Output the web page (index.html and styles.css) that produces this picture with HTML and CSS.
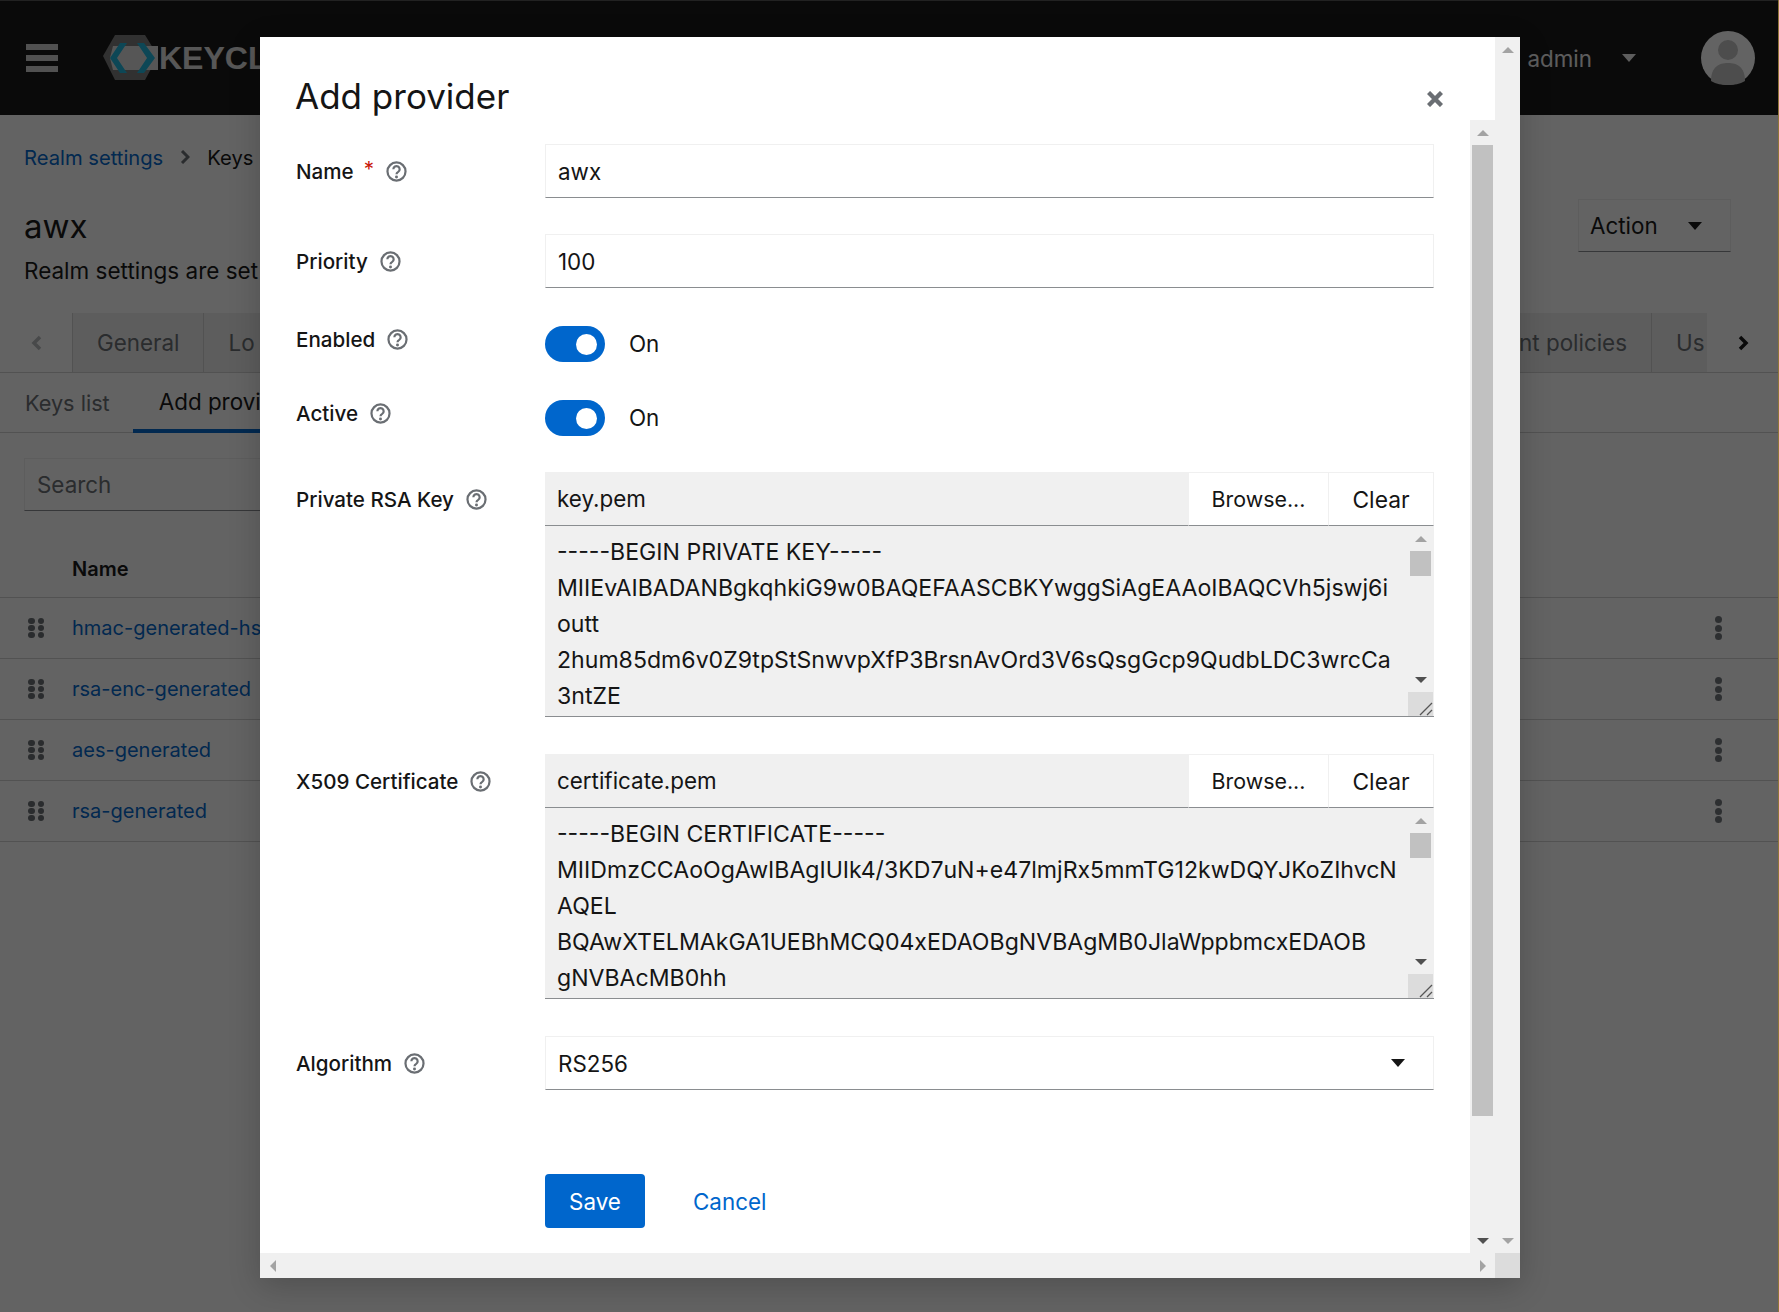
FILE: index.html
```html
<!DOCTYPE html>
<html>
<head>
  <meta charset="utf-8">
  <title>Keycloak - Add provider</title>
  <link rel="stylesheet" href="styles.css">
</head>
<body>

<div class="page">

  <header class="masthead">
    <div class="burger"><span></span><span></span><span></span></div>
    <div class="logo">
      <svg width="60" height="50" viewBox="0 0 60 50">
        <polygon points="3,23 15,2 45,2 58,23 45,47 15,47" fill="#7d7d7d"/>
        <polygon points="13,13 58,13 58,37 13,37 10,25" fill="#dedede"/>
        <polygon points="20,10 27,10 17,25 27,40 20,40 10,25" fill="#1fb6dc"/>
        <polygon points="37,10 44,10 55,25 44,40 37,40 47,25" fill="#1fb6dc"/>
      </svg>
      <span class="logo-text">KEYCL</span>
    </div>
    <div class="user">
      <span class="user-name">admin</span>
      <span class="caret caret-light"></span>
      <svg class="avatar" width="54" height="54" viewBox="0 0 54 54">
        <circle cx="27" cy="27" r="27" fill="#fff"/>
        <circle cx="27" cy="19" r="10" fill="#c4c4c4"/>
        <path d="M10 50c0-14 8-18 17-18s17 4 17 18c-5 3-11 4-17 4s-12-1-17-4z" fill="#c4c4c4"/>
      </svg>
    </div>
  </header>

  <nav class="crumbs">
    <a href="#">Realm settings</a>
    <svg class="crumb-sep" width="10" height="14" viewBox="0 0 10 14"><path d="M2 1l6 6-6 6" fill="none" stroke="#6a6e73" stroke-width="3"/></svg>
    <span>Keys</span>
  </nav>

  <section class="title-row">
    <div>
      <h1 class="realm">awx</h1>
      <p class="realm-sub">Realm settings are set</p>
    </div>
    <button class="action">Action <span class="caret"></span></button>
  </section>

  <div class="tabs">
    <div class="tab-btn"><svg width="11" height="16" viewBox="0 0 11 16"><path d="M9 2L3 8l6 6" fill="none" stroke="#b8bbbe" stroke-width="3.5"/></svg></div>
    <div class="tab-list">
      <div class="tab-group">
        <div class="tab">General</div>
        <div class="tab">Lo</div>
      </div>
      <div class="tab-group">
        <div class="tab">Client policies</div>
        <div class="tab tab-cut">Us</div>
      </div>
    </div>
    <div class="tab-btn"><svg width="11" height="16" viewBox="0 0 11 16"><path d="M2 2l6 6-6 6" fill="none" stroke="#151515" stroke-width="3.5"/></svg></div>
  </div>

  <div class="subtabs">
    <div class="subtab subtab-first">Keys list</div>
    <div class="subtab subtab-on">Add provider</div>
  </div>

  <div class="search">Search</div>

  <div class="table">
    <div class="thead">Name</div>
    <div class="trow"><span class="grip"><i></i><i></i><i></i><i></i><i></i><i></i></span><a href="#">hmac-generated-hs256</a><span class="kebab"><i></i><i></i><i></i></span></div>
    <div class="trow"><span class="grip"><i></i><i></i><i></i><i></i><i></i><i></i></span><a href="#">rsa-enc-generated</a><span class="kebab"><i></i><i></i><i></i></span></div>
    <div class="trow"><span class="grip"><i></i><i></i><i></i><i></i><i></i><i></i></span><a href="#">aes-generated</a><span class="kebab"><i></i><i></i><i></i></span></div>
    <div class="trow"><span class="grip"><i></i><i></i><i></i><i></i><i></i><i></i></span><a href="#">rsa-generated</a><span class="kebab"><i></i><i></i><i></i></span></div>
  </div>

</div>

<div class="backdrop"></div>

<div class="modal">

  <div class="modal-main">
    <div class="modal-head">
      <h2>Add provider</h2>
      <svg class="close" width="16" height="16" viewBox="0 0 16 16"><path d="M1.5 1.5l13 13M14.5 1.5l-13 13" stroke="#6a6e73" stroke-width="4.4"/></svg>
    </div>

    <div class="modal-body">
      <form class="form">

        <div class="row first">
          <div class="lbl">Name <span class="req">*</span>
            <svg class="help" viewBox="0 0 20 20"><circle cx="10" cy="10" r="8.6" fill="none" stroke="#6a6e73" stroke-width="2.1"/><path d="M7 7.8a3 3 0 1 1 4.6 2.6c-1 .6-1.6 1-1.6 2.2" fill="none" stroke="#6a6e73" stroke-width="2.1"/><circle cx="10" cy="15.2" r="1.4" fill="#6a6e73"/></svg>
          </div>
          <div class="input">awx</div>
        </div>

        <div class="row">
          <div class="lbl">Priority
            <svg class="help" viewBox="0 0 20 20"><circle cx="10" cy="10" r="8.6" fill="none" stroke="#6a6e73" stroke-width="2.1"/><path d="M7 7.8a3 3 0 1 1 4.6 2.6c-1 .6-1.6 1-1.6 2.2" fill="none" stroke="#6a6e73" stroke-width="2.1"/><circle cx="10" cy="15.2" r="1.4" fill="#6a6e73"/></svg>
          </div>
          <div class="input">100</div>
        </div>

        <div class="row row-toggle">
          <div class="lbl lbl-short">Enabled
            <svg class="help" viewBox="0 0 20 20"><circle cx="10" cy="10" r="8.6" fill="none" stroke="#6a6e73" stroke-width="2.1"/><path d="M7 7.8a3 3 0 1 1 4.6 2.6c-1 .6-1.6 1-1.6 2.2" fill="none" stroke="#6a6e73" stroke-width="2.1"/><circle cx="10" cy="15.2" r="1.4" fill="#6a6e73"/></svg>
          </div>
          <div class="switch"><span class="toggle"><i></i></span><span class="switch-txt">On</span></div>
        </div>

        <div class="row row-toggle">
          <div class="lbl lbl-short">Active
            <svg class="help" viewBox="0 0 20 20"><circle cx="10" cy="10" r="8.6" fill="none" stroke="#6a6e73" stroke-width="2.1"/><path d="M7 7.8a3 3 0 1 1 4.6 2.6c-1 .6-1.6 1-1.6 2.2" fill="none" stroke="#6a6e73" stroke-width="2.1"/><circle cx="10" cy="15.2" r="1.4" fill="#6a6e73"/></svg>
          </div>
          <div class="switch"><span class="toggle"><i></i></span><span class="switch-txt">On</span></div>
        </div>

        <div class="row">
          <div class="lbl">Private RSA Key
            <svg class="help" viewBox="0 0 20 20"><circle cx="10" cy="10" r="8.6" fill="none" stroke="#6a6e73" stroke-width="2.1"/><path d="M7 7.8a3 3 0 1 1 4.6 2.6c-1 .6-1.6 1-1.6 2.2" fill="none" stroke="#6a6e73" stroke-width="2.1"/><circle cx="10" cy="15.2" r="1.4" fill="#6a6e73"/></svg>
          </div>
          <div class="upload">
            <div class="upload-top">
              <div class="filename">key.pem</div>
              <div class="upbtn upbtn-browse">Browse...</div>
              <div class="upbtn upbtn-clear">Clear</div>
            </div>
            <div class="area">
              <div class="area-text">
                <div>-----BEGIN PRIVATE KEY-----</div>
                <div>MIIEvAIBADANBgkqhkiG9w0BAQEFAASCBKYwggSiAgEAAoIBAQCVh5jswj6i</div>
                <div>outt</div>
                <div>2hum85dm6v0Z9tpStSnwvpXfP3BrsnAvOrd3V6sQsgGcp9QudbLDC3wrcCa</div>
                <div>3ntZE</div>
              </div>
              <div class="area-bar">
                <div class="sb-btn"><span class="arr-up"></span></div>
                <div class="area-thumb"></div>
                <div class="sb-fill"></div>
                <div class="sb-btn"><span class="arr-down arr-dark"></span></div>
                <div class="area-corner"><svg width="14" height="14" viewBox="0 0 14 14"><path d="M1 13L13 1M8 13l5-5" stroke="#555" stroke-width="1.3"/></svg></div>
              </div>
            </div>
          </div>
        </div>

        <div class="row row-next">
          <div class="lbl">X509 Certificate
            <svg class="help" viewBox="0 0 20 20"><circle cx="10" cy="10" r="8.6" fill="none" stroke="#6a6e73" stroke-width="2.1"/><path d="M7 7.8a3 3 0 1 1 4.6 2.6c-1 .6-1.6 1-1.6 2.2" fill="none" stroke="#6a6e73" stroke-width="2.1"/><circle cx="10" cy="15.2" r="1.4" fill="#6a6e73"/></svg>
          </div>
          <div class="upload">
            <div class="upload-top">
              <div class="filename">certificate.pem</div>
              <div class="upbtn upbtn-browse">Browse...</div>
              <div class="upbtn upbtn-clear">Clear</div>
            </div>
            <div class="area">
              <div class="area-text">
                <div>-----BEGIN CERTIFICATE-----</div>
                <div>MIIDmzCCAoOgAwIBAgIUIk4/3KD7uN+e47lmjRx5mmTG12kwDQYJKoZIhvcN</div>
                <div>AQEL</div>
                <div>BQAwXTELMAkGA1UEBhMCQ04xEDAOBgNVBAgMB0JlaWppbmcxEDAOB</div>
                <div>gNVBAcMB0hh</div>
              </div>
              <div class="area-bar">
                <div class="sb-btn"><span class="arr-up"></span></div>
                <div class="area-thumb"></div>
                <div class="sb-fill"></div>
                <div class="sb-btn"><span class="arr-down arr-dark"></span></div>
                <div class="area-corner"><svg width="14" height="14" viewBox="0 0 14 14"><path d="M1 13L13 1M8 13l5-5" stroke="#555" stroke-width="1.3"/></svg></div>
              </div>
            </div>
          </div>
        </div>

        <div class="row row-next">
          <div class="lbl">Algorithm
            <svg class="help" viewBox="0 0 20 20"><circle cx="10" cy="10" r="8.6" fill="none" stroke="#6a6e73" stroke-width="2.1"/><path d="M7 7.8a3 3 0 1 1 4.6 2.6c-1 .6-1.6 1-1.6 2.2" fill="none" stroke="#6a6e73" stroke-width="2.1"/><circle cx="10" cy="15.2" r="1.4" fill="#6a6e73"/></svg>
          </div>
          <div class="input input-select">RS256 <span class="caret"></span></div>
        </div>

        <div class="row row-btns">
          <div class="lbl-gap"></div>
          <div class="btns">
            <div class="save">Save</div>
            <a class="cancel" href="#">Cancel</a>
          </div>
        </div>

      </form>

      <div class="vbar">
        <div class="sb-btn"><span class="arr-up"></span></div>
        <div class="vthumb"></div>
        <div class="sb-fill"></div>
        <div class="sb-btn"><span class="arr-down arr-dark"></span></div>
      </div>
    </div>
  </div>

  <div class="vbar vbar-outer">
    <div class="sb-btn"><span class="arr-up"></span></div>
    <div class="sb-fill"></div>
    <div class="sb-btn"><span class="arr-down"></span></div>
  </div>

  <div class="hbar">
    <div class="sb-btn"><span class="arr-left"></span></div>
    <div class="sb-btn"><span class="arr-right"></span></div>
  </div>

  <div class="sb-corner"></div>

</div>

</body>
</html>
```

FILE: styles.css
```css
html, body {
  margin: 0;
  height: 100%;
}

body {
  position: relative;
  height: 1312px;
  overflow: hidden;
  background-color: #fff;
  font-family: Inter, "Noto Sans", sans-serif;
  font-size: 22.4px;
  color: #151515;
}

a {
  color: #06c;
  text-decoration: none;
}

/* masthead */

.masthead {
  display: flex;
  align-items: center;
  height: 114px;
  background-color: #151515;
  border-top: 1px solid #555;
}

.burger {
  display: flex;
  flex-direction: column;
  justify-content: space-between;
  width: 32px;
  height: 28px;
  margin-left: 26px;
}

.burger span {
  height: 6px;
  background-color: #d0d0d0;
}

.logo {
  display: flex;
  align-items: center;
  margin-left: 42px;
}

.logo-text {
  margin-left: -1px;
  color: #e0e0e0;
  font-family: "Liberation Sans", sans-serif;
  font-size: 32px;
  font-weight: bold;
}

.user {
  display: flex;
  align-items: center;
  margin-left: auto;
  margin-right: 24px;
}

.user-name {
  color: #f0f0f0;
}

.caret {
  display: inline-block;
  width: 0;
  height: 0;
  border-left: 7px solid transparent;
  border-right: 7px solid transparent;
  border-top: 8px solid #151515;
}

.caret-light {
  margin-left: 30px;
  border-top-color: #f0f0f0;
}

.avatar {
  margin-left: 65px;
}

/* page head */

.crumbs {
  display: flex;
  align-items: center;
  height: 26px;
  margin-top: 29px;
  padding-left: 24px;
  font-size: 20.2px;
}

.crumb-sep {
  margin: 0 17px;
}

.title-row {
  display: flex;
  justify-content: space-between;
  margin-top: 29px;
  padding: 0 48px 0 24px;
}

.realm {
  margin: 0;
  font-size: 33px;
  font-weight: 400;
  line-height: 55px;
}

.realm-sub {
  margin: 0;
  font-size: 22.5px;
  line-height: 34px;
  white-space: nowrap;
}

.action {
  display: flex;
  align-items: center;
  justify-content: space-between;
  box-sizing: border-box;
  width: 153px;
  height: 53px;
  padding: 0 28px 0 11px;
  background: #fff;
  border: 1px solid #f0f0f0;
  border-bottom-color: #8a8d90;
  font: inherit;
  color: #151515;
}

/* tabs */

.tabs {
  display: flex;
  height: 60px;
  margin-top: 25px;
  border-bottom: 1px solid #d2d2d2;
  box-sizing: border-box;
}

.tab-btn {
  display: flex;
  align-items: center;
  justify-content: center;
  width: 72px;
  flex: none;
}

.tab-list {
  display: flex;
  justify-content: space-between;
  flex: 1;
  overflow: hidden;
}

.tab-group {
  display: flex;
}

.tab {
  display: flex;
  align-items: center;
  padding: 0 24px;
  background-color: #f0f0f0;
  border-left: 1px solid #d2d2d2;
  color: #6a6e73;
  white-space: nowrap;
}

.tab-cut {
  width: 31px;
  overflow: hidden;
  padding-right: 0;
}

.subtabs {
  display: flex;
  height: 60px;
  box-sizing: border-box;
  border-bottom: 1px solid #d2d2d2;
}

.subtab {
  display: flex;
  align-items: center;
  box-sizing: border-box;
  height: 60px;
  padding: 0 26px;
  color: #6a6e73;
}

.subtab-first {
  padding: 0 23px 0 25px;
  font-size: 21.7px;
}

.subtab-on {
  border-bottom: 4px solid #06c;
  padding-top: 1px;
  color: #151515;
}

.search {
  display: flex;
  align-items: center;
  box-sizing: border-box;
  width: 250px;
  height: 53px;
  margin: 25px 0 0 24px;
  padding-left: 12px;
  border: 1px solid #f0f0f0;
  border-bottom-color: #8a8d90;
  color: #6a6e73;
}

/* table */

.table {
  margin-top: 30px;
  font-size: 20px;
}

.thead {
  height: 56px;
  padding-left: 72px;
  line-height: 56px;
  font-weight: 600;
  border-bottom: 1px solid #d2d2d2;
}

.trow {
  display: flex;
  align-items: center;
  box-sizing: border-box;
  height: 61px;
  padding: 0 57px 0 28px;
  border-bottom: 1px solid #d2d2d2;
}

.grip {
  display: grid;
  grid-template-columns: 6.5px 6.5px;
  grid-auto-rows: 6px;
  gap: 1px 3px;
  margin-right: 28px;
}

.grip i {
  background-color: #6a6e73;
  border-radius: 3px;
}

.kebab {
  display: flex;
  flex-direction: column;
  gap: 1.5px;
  margin-left: auto;
}

.kebab i {
  width: 7px;
  height: 7px;
  border-radius: 50%;
  background-color: #72767b;
}

.backdrop {
  position: absolute;
  top: 0;
  left: 0;
  right: 0;
  bottom: 0;
  background-color: rgba(3, 3, 3, 0.62);
  border-right: 1px solid #8f7538;
}

/* modal */

.modal {
  position: absolute;
  left: 260px;
  top: 37px;
  display: grid;
  grid-template-columns: 1fr 25px;
  grid-template-rows: 1fr 25px;
  width: 1260px;
  height: 1241px;
  background-color: #fff;
  box-shadow: 0 8px 30px rgba(3, 3, 3, 0.2);
}

.modal-main {
  display: flex;
  flex-direction: column;
  min-height: 0;
}

.modal-head {
  display: flex;
  justify-content: space-between;
  box-sizing: border-box;
  height: 83px;
  padding: 37px 52px 0 35px;
}

.modal-head h2 {
  margin: 0;
  font-size: 35px;
  font-weight: 400;
  line-height: 44px;
}

.close {
  margin-top: 17px;
}

.modal-body {
  display: flex;
  flex: 1;
  min-height: 0;
}

.form {
  flex: 1;
  padding: 24px 36px 0;
}

.row {
  display: flex;
  margin-top: 36px;
}

.first {
  margin-top: 0;
}

.row-toggle {
  margin-top: 38px;
}

.row-next {
  margin-top: 37px;
}

.row-btns {
  margin-top: 84px;
}

.lbl, .lbl-gap {
  display: flex;
  align-items: center;
  flex: none;
  width: 249px;
  height: 54px;
  font-size: 20.6px;
  font-weight: 550;
}

.lbl-short {
  height: 26px;
}

.req {
  margin-left: 10px;
  color: #c9190b;
  font-weight: 400;
  align-self: flex-start;
  padding-top: 12px;
}

.help {
  width: 21px;
  height: 21px;
  margin-left: 12px;
}

.input {
  display: flex;
  align-items: center;
  flex: 1;
  box-sizing: border-box;
  height: 54px;
  padding-left: 12px;
  border: 1px solid #f0f0f0;
  border-bottom-color: #8a8d90;
}

.input-select {
  justify-content: space-between;
  padding-right: 28px;
}

.switch {
  display: flex;
  align-items: center;
}

.toggle {
  display: flex;
  align-items: center;
  justify-content: flex-end;
  box-sizing: border-box;
  width: 60px;
  height: 36px;
  padding-right: 8px;
  background-color: #06c;
  border-radius: 18px;
}

.toggle i {
  width: 21px;
  height: 21px;
  border-radius: 50%;
  background-color: #fff;
}

.switch-txt {
  margin-left: 24px;
  padding-bottom: 2px;
  color: #151515;
}

.upload {
  flex: 1;
  min-width: 0;
}

.upload-top {
  display: flex;
  height: 54px;
}

.filename {
  display: flex;
  align-items: center;
  flex: 1;
  padding-left: 12px;
  background-color: #f0f0f0;
  border-bottom: 1px solid #8a8d90;
}

.upbtn {
  display: flex;
  align-items: center;
  justify-content: center;
  box-sizing: border-box;
  border: 1px solid #f0f0f0;
  border-left: 0;
  border-bottom-color: #8a8d90;
}

.upbtn-browse {
  width: 141px;
  border-left: 1px solid #f0f0f0;
  font-size: 21.4px;
}

.upbtn-clear {
  width: 105px;
  font-size: 22.8px;
}

.area {
  display: flex;
  box-sizing: border-box;
  height: 191px;
  background-color: #f0f0f0;
  border-bottom: 1px solid #8a8d90;
}

.area-text {
  flex: 1;
  padding: 8px 0 0 12px;
  overflow: hidden;
  font-size: 23.1px;
  line-height: 36px;
  white-space: nowrap;
}

.area-bar {
  display: flex;
  flex-direction: column;
  width: 25px;
  margin-right: 1px;
}

.area-thumb {
  flex: none;
  height: 25px;
  margin: 0 2px;
  background-color: #c1c1c1;
}

.area-corner {
  display: flex;
  align-items: flex-end;
  justify-content: flex-end;
  flex: none;
  height: 24px;
  background-color: #dcdcdc;
}

/* scrollbars */

.vbar {
  display: flex;
  flex-direction: column;
  flex: none;
  width: 25px;
  background-color: #f0f0f0;
}

.vthumb {
  flex: none;
  height: 971px;
  margin: 0 2px;
  background-color: #c1c1c1;
}

.sb-fill {
  flex: 1;
}

.sb-btn {
  display: flex;
  align-items: center;
  justify-content: center;
  flex: none;
  width: 25px;
  height: 25px;
}

.hbar {
  display: flex;
  justify-content: space-between;
  background-color: #f0f0f0;
}

.sb-corner {
  background-color: #dcdcdc;
}

.arr-up, .arr-down, .arr-left, .arr-right {
  width: 0;
  height: 0;
}

.arr-up {
  border-left: 6px solid transparent;
  border-right: 6px solid transparent;
  border-bottom: 6px solid #a3a3a3;
}

.arr-down {
  border-left: 6px solid transparent;
  border-right: 6px solid transparent;
  border-top: 6px solid #a3a3a3;
}

.arr-dark {
  border-top-color: #505050;
}

.arr-left {
  border-top: 6px solid transparent;
  border-bottom: 6px solid transparent;
  border-right: 6px solid #a3a3a3;
}

.arr-right {
  border-top: 6px solid transparent;
  border-bottom: 6px solid transparent;
  border-left: 6px solid #a3a3a3;
}

/* form buttons */

.btns {
  display: flex;
  align-items: center;
}

.save {
  display: flex;
  align-items: center;
  justify-content: center;
  width: 100px;
  height: 54px;
  background-color: #06c;
  border-radius: 4px;
  color: #fff;
}

.cancel {
  margin-left: 48px;
}
```
